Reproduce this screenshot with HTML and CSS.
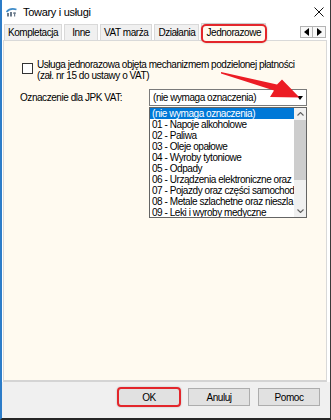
FILE: index.html
```html
<!DOCTYPE html>
<html lang="pl">
  <head>
    <meta charset="UTF-8" />
    <title>Towary i usługi</title>
    <link rel="stylesheet" href="styles.css">
  </head>
  <body>
    <div class="window">
      <!-- pasek tytułu -->
      <div class="titlebar">
        <svg class="app-icon" viewBox="0 0 11 10" width="11" height="10">
          <path d="M0.5 5 Q4 0.5 10.5 2.5" fill="none" stroke="#3f8cc9" stroke-width="1.6"></path>
          <rect x="1" y="6" width="2" height="3.5" fill="#6b7b8c"></rect>
          <rect x="4" y="5" width="2" height="4.5" fill="#6b7b8c"></rect>
          <rect x="7" y="5.5" width="3" height="1.2" fill="#6b7b8c"></rect>
          <rect x="8" y="5.5" width="1.2" height="4" fill="#6b7b8c"></rect>
        </svg>
        <span class="title">Towary i usługi</span>
        <svg class="close" viewBox="0 0 10 10" width="10" height="10">
          <path d="M0.5 0.5 L9.5 9.5 M9.5 0.5 L0.5 9.5" stroke="#111" stroke-width="1"></path>
        </svg>
      </div>

      <!-- zakładki -->
      <div class="tabstrip">
        <div class="tab">Kompletacja</div>
        <div class="tab">Inne</div>
        <div class="tab">VAT marża</div>
        <div class="tab">Działania</div>
        <div class="tab active">Jednorazowe</div>
        <div class="tab-scroll">
          <span class="scroll-btn"><span class="tri-left"></span></span>
          <span class="scroll-btn"><span class="tri-right"></span></span>
        </div>
      </div>

      <div class="panel">
        <div class="check-row">
          <span class="checkbox"></span>
          <span class="check-text">Usługa jednorazowa objęta mechanizmem podzielonej płatności<br>(zał. nr 15 do ustawy o VAT)</span>
        </div>

        <div class="field-row">
          <span class="field-label">Oznaczenie dla JPK VAT:</span>
          <div class="combo-wrap">
            <div class="combo">
              <span class="combo-value">(nie wymaga oznaczenia)</span>
              <span class="combo-arrow"></span>
            </div>
            <div class="dropdown">
              <ul class="options">
                <li class="selected">(nie wymaga oznaczenia)</li>
                <li>01 - Napoje alkoholowe</li>
                <li>02 - Paliwa</li>
                <li>03 - Oleje opałowe</li>
                <li>04 - Wyroby tytoniowe</li>
                <li>05 - Odpady</li>
                <li>06 - Urządzenia elektroniczne oraz</li>
                <li>07 - Pojazdy oraz części samochod</li>
                <li>08 - Metale szlachetne oraz nieszla</li>
                <li>09 - Leki i wyroby medyczne</li>
              </ul>
              <div class="scrollbar">
                <span class="sb-btn">
                  <svg viewBox="0 0 7 4" width="7" height="4"><polyline points="0.5 3.5 3.5 0.5 6.5 3.5" fill="none" stroke="#606060" stroke-width="1.1"></polyline></svg>
                </span>
                <span class="sb-thumb"></span>
                <span class="sb-track"></span>
                <span class="sb-btn">
                  <svg viewBox="0 0 7 4" width="7" height="4"><polyline points="0.5 0.5 3.5 3.5 6.5 0.5" fill="none" stroke="#606060" stroke-width="1.1"></polyline></svg>
                </span>
              </div>
            </div>
          </div>
        </div>
      </div>

      <div class="footer">
        <button class="btn marked">OK</button>
        <button class="btn">Anuluj</button>
        <button class="btn">Pomoc</button>
      </div>

      <!-- strzałka z adnotacji -->
      <svg class="callout-arrow" viewBox="0 0 331 420" width="331" height="420">
        <polygon points="221,72 277,84.5 282,79.5 299.5,97.5 270,97 274,90.5 221,73.6" fill="#ec1c24"></polygon>
      </svg>
    </div>
  </body>
</html>
```

FILE: styles.css
```css
* {
  box-sizing: border-box;
}

body {
  margin: 0;
  font-family: "Liberation Sans", Arial, sans-serif;
  font-size: 10px;
  letter-spacing: -0.45px;
  color: #000;
  background: #fff;
}

.window {
  position: relative;
  width: 331px;
  height: 420px;
  display: flex;
  flex-direction: column;
  background: #fff;
  border-left: 2px solid #2c7cc8;
  border-right: 1px solid #3a3a3a;
  border-bottom: 2px solid #262626;
}

/* pasek tytułu */
.titlebar {
  height: 23px;
  display: flex;
  align-items: center;
  padding: 0 6px 0 4px;
}

.app-icon {
  margin-right: 6px;
}

.title {
  font-size: 11px;
  letter-spacing: -0.3px;
}

.close {
  margin-left: auto;
}

/* zakładki */
.tabstrip {
  position: relative;
  z-index: 1;
  height: 17px;
  display: flex;
  align-items: flex-end;
  padding: 0 4px 0 2px;
}

.tab {
  height: 16px;
  min-width: 34px;
  line-height: 15px;
  padding: 0 3px;
  margin-right: 2px;
  text-align: center;
  background: #f0f0f0;
  border: 1px solid #d9d9d9;
  border-bottom: none;
  white-space: nowrap;
}

.tab.active {
  position: relative;
  height: 18px;
  line-height: 17px;
  padding: 0 4px;
  margin-bottom: -1px;
  background: #fffaf0;
}

.tab.active::after {
  content: "";
  position: absolute;
  left: -1px;
  right: -2px;
  top: 0;
  bottom: -2px;
  border: 2px solid #e3262b;
  border-radius: 5px;
  box-shadow: 0 0 2px rgba(0, 0, 0, 0.25);
}

.tab-scroll {
  margin-left: auto;
  margin-bottom: 2px;
  display: flex;
}

.scroll-btn {
  width: 13px;
  height: 12px;
  display: flex;
  align-items: center;
  justify-content: center;
  background: #f8f8f8;
  border: 1px solid #b4b4b4;
}

.scroll-btn + .scroll-btn {
  border-left: none;
}

.tri-left,
.tri-right {
  width: 0;
  height: 0;
  border-top: 4px solid transparent;
  border-bottom: 4px solid transparent;
}

.tri-left {
  border-right: 5px solid #000;
}

.tri-right {
  border-left: 5px solid #000;
}

/* zawartość zakładki */
.panel {
  flex: 1;
  margin: 0 3px 0 1px;
  padding: 18px 16px 0 16px;
  background: #fffaf0;
  border: 1px solid #d9d9d9;
  border-bottom: 2px solid #d4d4d4;
}

.check-row {
  display: flex;
  align-items: flex-start;
  line-height: 11px;
}

.checkbox {
  flex: none;
  width: 11px;
  height: 11px;
  margin: 4px 4px 0 2px;
  background: #fff;
  border: 1px solid #333;
}

.field-row {
  display: flex;
  align-items: flex-start;
  margin-top: 8px;
}

.field-label {
  width: 129px;
  line-height: 17px;
}

.combo {
  width: 158px;
  height: 17px;
  display: flex;
  align-items: center;
  padding: 0 3px 0 3px;
  background: #fff;
  border: 1px solid #7a7a7a;
}

.combo-arrow {
  margin-left: auto;
  width: 0;
  height: 0;
  border-left: 3.5px solid transparent;
  border-right: 3.5px solid transparent;
  border-top: 4px solid #000;
}

.dropdown {
  width: 158px;
  height: 111px;
  margin-top: 1px;
  display: flex;
  background: #fff;
  border: 1px solid #646464;
}

.options {
  flex: 1;
  min-width: 0;
  margin: 0;
  padding: 0;
  list-style: none;
  overflow: hidden;
}

.options li {
  height: 11px;
  line-height: 11px;
  padding-left: 2px;
  white-space: nowrap;
  overflow: hidden;
}

.options li.selected {
  background: #0078d7;
  color: #fff;
}

.scrollbar {
  width: 12px;
  display: flex;
  flex-direction: column;
  background: #f0f0f0;
}

.sb-btn {
  height: 12px;
  display: flex;
  align-items: center;
  justify-content: center;
}

.sb-thumb {
  height: 60px;
  background: #cdcdcd;
}

.sb-track {
  flex: 1;
}

/* przyciski */
.footer {
  height: 36px;
  display: flex;
  justify-content: flex-end;
  align-items: flex-start;
  gap: 8px;
  padding: 6px 10px 0 0;
  background: #f0f0f0;
}

.btn {
  width: 62px;
  height: 18px;
  padding: 0;
  font: inherit;
  letter-spacing: inherit;
  color: #000;
  background: #e1e1e1;
  border: 1px solid #adadad;
}

.btn.marked {
  position: relative;
}

.btn.marked::after {
  content: "";
  position: absolute;
  left: -2px;
  right: -2px;
  top: -2px;
  bottom: -2px;
  border: 2px solid #e3262b;
  border-radius: 4px;
  box-shadow: 0 0 2px rgba(0, 0, 0, 0.25);
}

.callout-arrow {
  position: absolute;
  left: -2px;
  top: 0;
  pointer-events: none;
}
```
